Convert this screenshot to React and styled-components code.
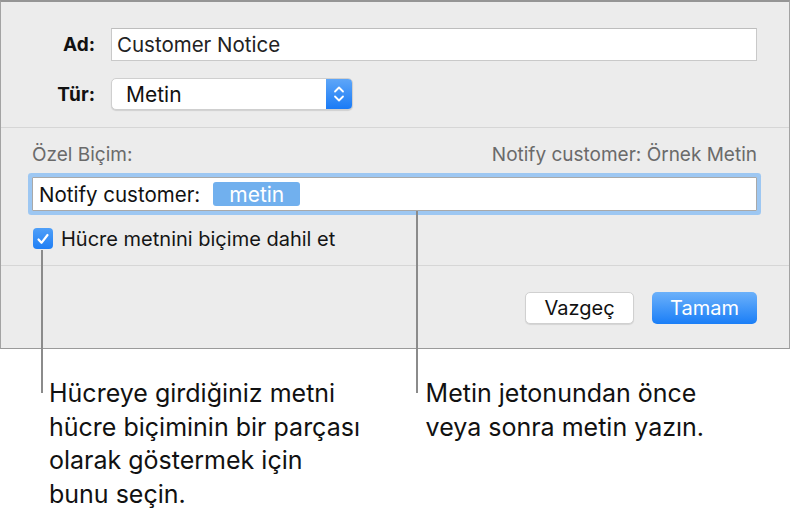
import React from 'react';
import styled, { createGlobalStyle } from 'styled-components';

const GlobalStyle = createGlobalStyle`
  html, body {
    margin: 0;
    padding: 0;
    background: #ffffff;
  }
  body {
    font-family: Inter, "Noto Sans", "Liberation Sans", sans-serif;
    color: #1b1b1b;
  }
`;

const Page = styled.div`
  position: relative;
  width: 790px;
  height: 519px;
  overflow: hidden;
`;

const Dialog = styled.div`
  box-sizing: border-box;
  width: 790px;
  height: 349px;
  background: #ececec;
  border-top: 2px solid #959595;
  border-left: 1px solid #a3a3a3;
  border-right: 1px solid #a3a3a3;
  border-bottom: 1px solid #9a9a9a;
  display: flex;
  flex-direction: column;
`;

const Section = styled.div`
  padding: ${(p) => p.pad};
  display: flex;
  flex-direction: column;
  gap: ${(p) => p.gap || 0}px;
`;

const Divider = styled.div`
  height: 1px;
  background: #d6d6d6;
`;

const FieldRow = styled.div`
  display: grid;
  grid-template-columns: 94px 1fr;
  column-gap: 16px;
  align-items: center;
`;

const Label = styled.div`
  text-align: right;
  font-weight: 700;
  font-size: 19px;
  color: #111;
`;

const TextField = styled.div`
  box-sizing: border-box;
  height: 33px;
  background: #fff;
  border: 1px solid #c9c9c9;
  border-top-color: #bdbdbd;
  padding: 0 5px;
  display: flex;
  align-items: center;
  font-size: 20.5px;
  color: #222;
`;

const Popup = styled.div`
  box-sizing: border-box;
  width: 242px;
  height: 32px;
  display: flex;
  background: #fff;
  border: 1px solid #cfcfcf;
  border-radius: 5px;
  box-shadow: 0 1px 1px rgba(0, 0, 0, 0.12);
  overflow: hidden;
`;

const PopupText = styled.div`
  flex: 1;
  display: flex;
  align-items: center;
  padding-left: 14px;
  font-size: 21px;
  color: #111;
`;

const Stepper = styled.div`
  width: 26px;
  background: linear-gradient(#5ea6f8, #1a7bf6);
  display: flex;
  align-items: center;
  justify-content: center;
`;

const HeaderRow = styled.div`
  display: flex;
  justify-content: space-between;
  align-items: center;
  height: 22px;
  font-size: 19px;
  color: #6a6a6a;
`;

const FormatField = styled.div`
  box-sizing: border-box;
  height: 34px;
  background: #fff;
  border: 1px solid #a9a9a9;
  box-shadow: 0 0 0 4px #9dc7f2;
  border-radius: 1px;
  display: flex;
  align-items: center;
  gap: 13px;
  padding-left: 6px;
  font-size: 20.5px;
  color: #111;
`;

const Token = styled.span`
  width: 87px;
  height: 24px;
  border-radius: 3px;
  background: #71b0ee;
  color: #fff;
  display: flex;
  align-items: center;
  justify-content: center;
  font-size: 21px;
`;

const CheckRow = styled.label`
  display: flex;
  align-items: center;
  gap: 8px;
  height: 21px;
  margin-top: 5px;
  padding-left: 1px;
  font-size: 20px;
  color: #151515;
`;

const CheckBox = styled.span`
  width: 20px;
  height: 21px;
  border-radius: 4px;
  background: linear-gradient(#4f9ff8, #1f7ff5);
  display: flex;
  align-items: center;
  justify-content: center;
`;

const ButtonRow = styled.div`
  display: flex;
  justify-content: flex-end;
  gap: 18px;
`;

const Button = styled.div`
  box-sizing: border-box;
  width: ${(p) => p.w}px;
  height: 32px;
  border-radius: 5px;
  display: flex;
  align-items: center;
  justify-content: center;
  font-size: 20px;
  ${(p) =>
    p.primary
      ? `
    background: linear-gradient(#6cb1fa, #1a7ef7);
    color: #fff;
  `
      : `
    background: #fff;
    color: #111;
    border: 1px solid #d0d0d0;
    box-shadow: 0 1px 1px rgba(0,0,0,0.1);
  `}
`;

const Callouts = styled.div`
  display: flex;
  padding-top: 28px;
`;

const CalloutText = styled.div`
  width: ${(p) => p.w}px;
  padding-left: ${(p) => p.left}px;
  font-size: 25px;
  line-height: 33.7px;
  color: #111;
`;

const Line = styled.div`
  white-space: nowrap;
`;

const Leader = styled.div`
  position: absolute;
  left: ${(p) => p.x}px;
  top: ${(p) => p.top}px;
  width: 2px;
  height: ${(p) => p.h}px;
  background: #8b8b8b;
`;

const Chevrons = () => (
  <svg width="12" height="20" viewBox="0 0 12 20">
    <path d="M2 7.5 L6 3.5 L10 7.5" fill="none" stroke="#fff" strokeWidth="1.8" strokeLinecap="round" strokeLinejoin="round" />
    <path d="M2 12.5 L6 16.5 L10 12.5" fill="none" stroke="#fff" strokeWidth="1.8" strokeLinecap="round" strokeLinejoin="round" />
  </svg>
);

const Check = () => (
  <svg width="14" height="14" viewBox="0 0 14 14">
    <path d="M2.5 7.5 L5.5 10.8 L11.5 3" fill="none" stroke="#fff" strokeWidth="2.2" strokeLinecap="round" strokeLinejoin="round" />
  </svg>
);

export default function App() {
  return (
    <Page>
      <GlobalStyle />
      <Dialog>
        <Section pad="26px 32px 17px 0" gap={17}>
          <FieldRow>
            <Label>Ad:</Label>
            <TextField>Customer Notice</TextField>
          </FieldRow>
          <FieldRow>
            <Label>Tür:</Label>
            <Popup>
              <PopupText>Metin</PopupText>
              <Stepper>
                <Chevrons />
              </Stepper>
            </Popup>
          </FieldRow>
        </Section>
        <Divider />
        <Section pad="15px 32px 16px 31px" gap={12}>
          <HeaderRow>
            <span>Özel Biçim:</span>
            <span>Notify customer: Örnek Metin</span>
          </HeaderRow>
          <FormatField>
            <span>Notify customer:</span>
            <Token>metin</Token>
          </FormatField>
          <CheckRow>
            <CheckBox>
              <Check />
            </CheckBox>
            Hücre metnini biçime dahil et
          </CheckRow>
        </Section>
        <Divider />
        <Section pad="26px 32px 0 0">
          <ButtonRow>
            <Button w={109}>Vazgeç</Button>
            <Button w={105} primary>
              Tamam
            </Button>
          </ButtonRow>
        </Section>
      </Dialog>
      <Callouts>
        <CalloutText w={374} left={49}>
          <Line>Hücreye girdiğiniz metni</Line>
          <Line>hücre biçiminin bir parçası</Line>
          <Line>olarak göstermek için</Line>
          <Line>bunu seçin.</Line>
        </CalloutText>
        <CalloutText w={416} left={49}>
          <Line>Metin jetonundan önce</Line>
          <Line>veya sonra metin yazın.</Line>
        </CalloutText>
      </Callouts>
      <Leader x={41} top={250} h={143} />
      <Leader x={416} top={211} h={182} />
    </Page>
  );
}
